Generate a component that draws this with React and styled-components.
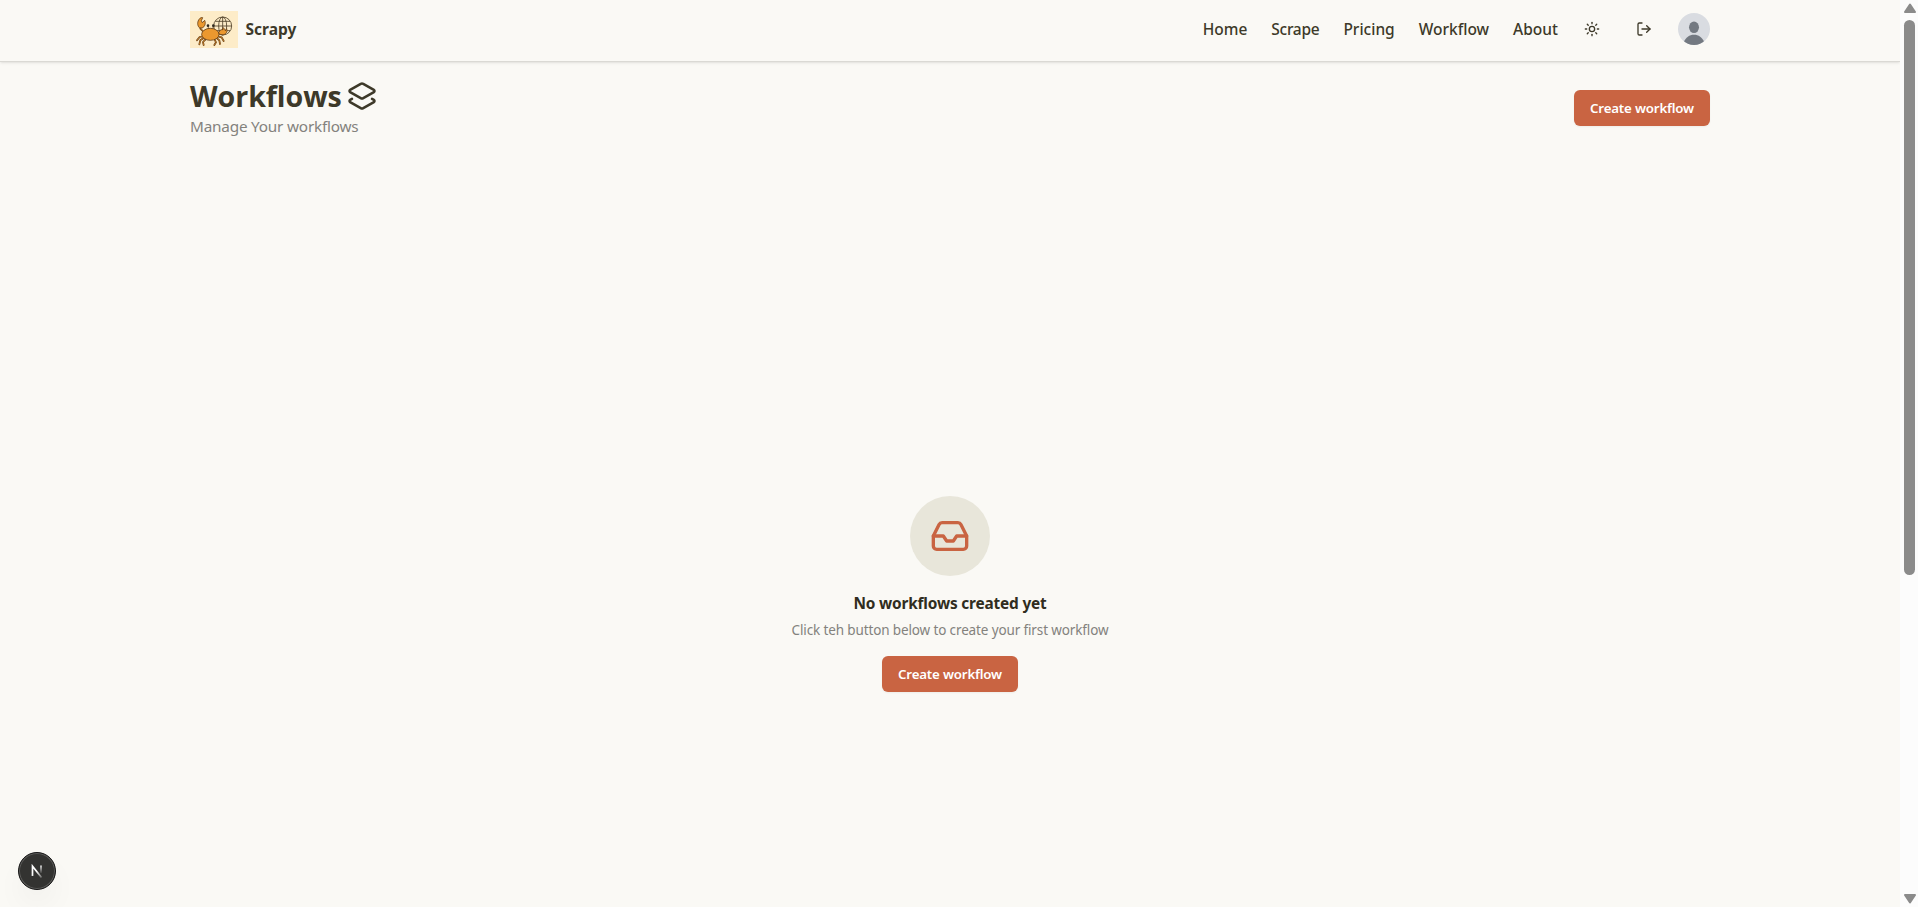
import React from "react";
import styled, { createGlobalStyle } from "styled-components";
import { Inbox, Layers2, LogOut, Sun } from "lucide-react";

const GlobalStyle = createGlobalStyle`
  *, *::before, *::after { box-sizing: border-box; }
  html, body { margin: 0; height: 100%; overflow: hidden; }
  body {
    background: #faf9f5;
    color: #3d3929;
    font-family: "Noto Sans", "Open Sans", sans-serif;
  }
  button { font-family: inherit; cursor: pointer; }
  h1, p { margin: 0; }
`;

const Shell = styled.div`
  display: flex;
  height: 100vh;
`;

const Page = styled.div`
  flex: 1;
  min-width: 0;
  display: flex;
  flex-direction: column;
`;

const Header = styled.header`
  flex: none;
  height: 62px;
  border-bottom: 1px solid #dad9d4;
  box-shadow: 0 1px 3px rgba(0, 0, 0, 0.08), 0 1px 2px -1px rgba(0, 0, 0, 0.08);
  padding: 0 190px 3px;
  display: flex;
  align-items: center;
  justify-content: space-between;
`;

const Brand = styled.a`
  display: flex;
  align-items: center;
  gap: 7.5px;
  font-size: 15.5px;
  font-weight: 700;
  line-height: 24px;
`;

const Logo = styled.svg`
  display: block;
  width: 48px;
  height: 37px;
`;

const Nav = styled.nav`
  display: flex;
  align-items: center;
  gap: 24px;
`;

const NavLink = styled.a`
  font-size: 15.5px;
  font-weight: 500;
  line-height: 24px;
  letter-spacing: ${(p) => (p.$tight ? "-0.28px" : "0")};
`;

const Actions = styled.div`
  display: flex;
  align-items: center;
  gap: 16px;
  margin-left: -8px;
`;

const IconButton = styled.button`
  width: 36px;
  height: 36px;
  padding: 0;
  border: 0;
  background: none;
  color: #3d3929;
  display: grid;
  place-items: center;
`;

const Avatar = styled.svg`
  display: block;
  width: 32px;
  height: 32px;
  border-radius: 50%;
`;

const Main = styled.main`
  flex: 1;
  padding: 16px 190px 0;
  display: flex;
  flex-direction: column;
`;

const TitleBar = styled.div`
  display: flex;
  align-items: center;
  justify-content: space-between;
`;

const Title = styled.h1`
  display: flex;
  align-items: center;
  gap: 5px;
  height: 36px;
  font-family: "Open Sans", "Noto Sans", sans-serif;
  font-size: 28.6px;
  font-weight: 700;
  line-height: 36px;
  letter-spacing: -0.06px;
`;

const Subtitle = styled.p`
  color: #83827d;
  font-size: 15.3px;
  line-height: 24px;
  letter-spacing: -0.2px;
`;

const PrimaryButton = styled.button`
  width: 136px;
  height: 36px;
  padding: 0;
  border: 0;
  border-radius: 6px;
  background: #c96442;
  color: #fff;
  font-size: 13.3px;
  font-weight: 600;
  line-height: 20px;
  letter-spacing: -0.18px;
  white-space: nowrap;
  box-shadow: 0 1px 2px rgba(0, 0, 0, 0.05);
`;

const EmptyState = styled.section`
  margin-top: 358px;
  display: flex;
  flex-direction: column;
  align-items: center;
  gap: 16px;
`;

const EmptyIcon = styled.div`
  width: 80px;
  height: 80px;
  border-radius: 50%;
  background: #e8e6da;
  color: #c96442;
  display: grid;
  place-items: center;
`;

const EmptyText = styled.div`
  display: flex;
  flex-direction: column;
  align-items: center;
  gap: 4px;
`;

const EmptyTitle = styled.p`
  color: #302d20;
  font-size: 15.4px;
  font-weight: 700;
  line-height: 24px;
  letter-spacing: -0.17px;
`;

const EmptyHint = styled.p`
  color: #83827d;
  font-size: 13.5px;
  line-height: 20px;
  letter-spacing: -0.13px;
`;

const ScrollTrack = styled.div`
  flex: none;
  width: 18px;
  background: #fcfcfc;
  display: flex;
  flex-direction: column;
  align-items: center;
  padding: 3px 0 3px 1px;
`;

const ScrollThumb = styled.div`
  width: 11px;
  height: 555px;
  margin: 7px 0 auto;
  border-radius: 6px;
  background: #8b8b8b;
`;

const ScrollArrow = styled.svg`
  display: block;
  width: 12px;
  height: 10px;
  fill: #8b8b8b;
  stroke: #8b8b8b;
  stroke-width: 2;
  stroke-linejoin: round;
`;

const DevBadge = styled.button`
  position: fixed;
  left: 18px;
  bottom: 17px;
  width: 38px;
  height: 38px;
  padding: 0;
  border: 1px solid #171717;
  border-radius: 50%;
  background: #333331;
  box-shadow: inset 0 0 0 1px #5c5c5a, 0 16px 32px -8px rgba(0, 0, 0, 0.1);
  display: grid;
  place-items: center;
`;

const links = ["Home", "Scrape", "Pricing", "Workflow", "About"];

const legs =
  "M39 76l-10 2-8 10M41 81l-10 7-3 12M46 86l-7 7 2 9M83 76l12 3 6 11M80 81l8 7 2 11M74 86l4 8-5 8M41 63l-10-10";

function CrabLogo() {
  return (
    <Logo viewBox="0 0 144 111">
      <rect width="144" height="111" fill="#fdecc8" />
      <g fill="none" stroke="#54442c" strokeWidth="2.6">
        <circle cx="98" cy="45" r="27" />
        <ellipse cx="98" cy="45" rx="12" ry="27" />
        <path d="M98 18v54M71 45h54M76 31h44M76 59h44" />
      </g>
      <g fill="none" strokeLinecap="round" strokeLinejoin="round">
        <path d={legs} stroke="#5f3a14" strokeWidth="5.200" />
        <path d={legs} stroke="#d98a2c" strokeWidth="2.200" />
      </g>
      <g fill="#eb982f" stroke="#5f3a14" strokeWidth="2.400" strokeLinejoin="round">
        <path d="M28 50c-7-7-6-19 0-26 3-4 7-5 10-4l-4 9 3 6 7-7c4 8 1 20-8 23z" />
        <path d="M86 64c4-7 8-9 13-8l-1-6c5 1 7 5 8 9l4-6c3 8-1 16-9 18-6 1-11-1-15-3z" />
        <ellipse cx="61" cy="70" rx="26" ry="18" />
      </g>
      <path d="M55 53v-6M69 53v-6" stroke="#5f3a14" strokeWidth="2" />
      <circle cx="54" cy="44" r="4" fill="#30291f" />
      <circle cx="70" cy="44" r="4" fill="#30291f" />
    </Logo>
  );
}

export default function App() {
  return (
    <>
      <GlobalStyle />
      <Shell>
        <Page>
          <Header>
            <Brand>
              <CrabLogo />
              Scrapy
            </Brand>
            <Nav>
              {links.map((name) => (
                <NavLink key={name} $tight={name === "Scrape"}>
                  {name}
                </NavLink>
              ))}
              <Actions>
                <IconButton aria-label="Theme">
                  <Sun size={16} />
                </IconButton>
                <IconButton aria-label="Log out">
                  <LogOut size={16} />
                </IconButton>
                <Avatar viewBox="0 0 32 32">
                  <rect width="32" height="32" fill="#d9dce1" />
                  <ellipse cx="16" cy="14.3" rx="5" ry="5.8" fill="#737981" />
                  <path d="M6 29c1.600-4.600 5.400-7.200 10-7.200s8.400 2.600 10 7.200v3H6z" fill="#737981" />
                </Avatar>
              </Actions>
            </Nav>
          </Header>
          <Main>
            <TitleBar>
              <div>
                <Title>
                  Workflows
                  <Layers2 size={30} />
                </Title>
                <Subtitle>Manage Your workflows</Subtitle>
              </div>
              <PrimaryButton>Create workflow</PrimaryButton>
            </TitleBar>
            <EmptyState>
              <EmptyIcon>
                <Inbox size={40} />
              </EmptyIcon>
              <EmptyText>
                <EmptyTitle>No workflows created yet</EmptyTitle>
                <EmptyHint>Click teh button below to create your first workflow</EmptyHint>
              </EmptyText>
              <PrimaryButton>Create workflow</PrimaryButton>
            </EmptyState>
          </Main>
        </Page>
        <ScrollTrack>
          <ScrollArrow viewBox="0 0 12 10">
            <path d="M6 1.500L11 9H1z" />
          </ScrollArrow>
          <ScrollThumb />
          <ScrollArrow viewBox="0 0 12 10">
            <path d="M6 8.500L11 1H1z" />
          </ScrollArrow>
        </ScrollTrack>
      </Shell>
      <DevBadge aria-label="Developer tools">
        <svg width="14" height="14" viewBox="0 0 14 14" fill="none">
          <defs>
            <linearGradient id="diag" x1="7" y1="7" x2="12" y2="14" gradientUnits="userSpaceOnUse">
              <stop stopColor="#fff" />
              <stop offset="1" stopColor="#fff" stopOpacity="0.2" />
            </linearGradient>
            <linearGradient id="stem" x1="11" y1="1" x2="11" y2="9" gradientUnits="userSpaceOnUse">
              <stop stopColor="#fff" />
              <stop offset="1" stopColor="#fff" stopOpacity="0.1" />
            </linearGradient>
          </defs>
          <path d="M2.500 12V2.200L11.500 13.500" stroke="url(#diag)" strokeWidth="1.700" />
          <path d="M11 1.500V9" stroke="url(#stem)" strokeWidth="1.600" />
        </svg>
      </DevBadge>
    </>
  );
}
